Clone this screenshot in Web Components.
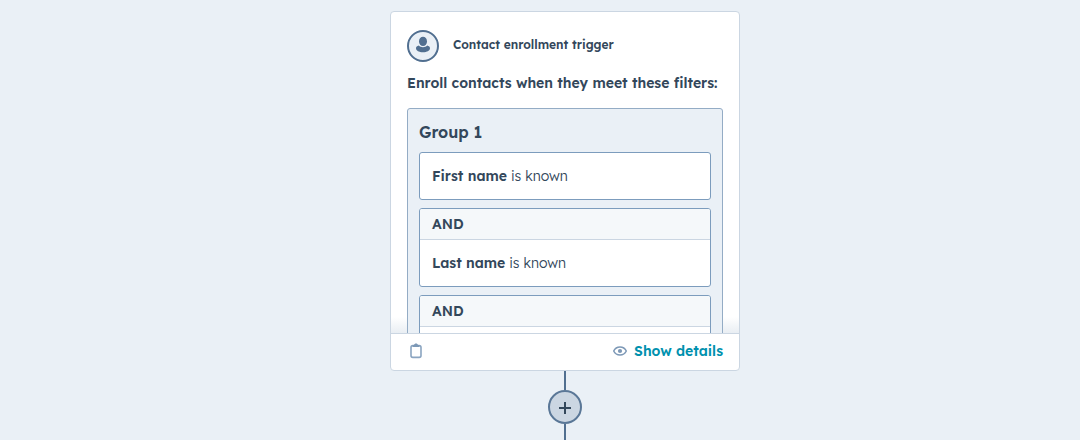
<!DOCTYPE html>
<html lang="en">
<head>
<meta charset="utf-8">
<title>Workflow</title>
<style>
html, body { height: 100%; }
body {
  margin: 0;
  background: #eaf0f6;
  color: #33475b;
  font: 14px/20px "Lexend Deca", Inter, "Open Sans", sans-serif;
}
</style>
</head>
<body>
<workflow-canvas>
  <trigger-card>
    <span slot="title">Contact enrollment trigger</span>
    <span slot="heading">Enroll contacts when they meet these filters:</span>
    <filter-group label="Group 1">
      <filter-rule property="First name" condition="is known"></filter-rule>
      <filter-rule operator="AND" property="Last name" condition="is known"></filter-rule>
      <filter-rule operator="AND"></filter-rule>
    </filter-group>
  </trigger-card>
  <add-step></add-step>
</workflow-canvas>
<script>
const define = (name, html, setup) => customElements.define(name, class extends HTMLElement {
  constructor() {
    super();
    const template = document.createElement('template');
    template.innerHTML = html;
    this.attachShadow({ mode: 'open' }).append(template.content.cloneNode(true));
  }
  connectedCallback() { if (setup) setup(this, this.shadowRoot); }
});

define('workflow-canvas', `
<style>
:host {
  display: flex; flex-direction: column; align-items: center;
  box-sizing: border-box; height: 100vh; overflow: hidden;
  padding: 11px 0 0 50px;
}
</style>
<slot></slot>`);

define('contact-icon', `
<style>
:host { display: block; flex: none; width: 32px; height: 32px; }
svg { display: block; }
</style>
<svg width="32" height="32" viewBox="0 0 32 32" aria-hidden="true">
  <circle cx="16" cy="16" r="15" fill="#eaf0f6" stroke="#516f90" stroke-width="2"/>
  <ellipse cx="16" cy="11.4" rx="4" ry="4.7" fill="#516f90"/>
  <path d="M11.8 15.6C10 16.1 9 17.1 9 18.3C9 20.7 12 22.3 16 22.3S23 20.7 23 18.3C23 17.1 22 16.1 20.2 15.6C19.2 16.6 17.8 17.3 16 17.3S12.8 16.6 11.8 15.6Z" fill="#516f90"/>
</svg>`);

define('trigger-card', `
<style>
:host {
  display: block; box-sizing: border-box; flex: none;
  width: 100%; max-width: 350px;
  background: #fff; border: 1px solid #cbd6e2; border-radius: 4px;
}
.content {
  max-height: 321px; overflow: hidden; box-sizing: border-box;
  padding: 18px 16px 0; border-radius: 3px 3px 0 0;
  background: linear-gradient(to top, #e9eef3, #fff) bottom / 100% 16px no-repeat;
}
header { display: flex; gap: 14px; font-size: 12px; font-weight: 600; }
header div { padding-top: 5px; }
h2 { margin: 11px 0 15px; font-size: 14px; line-height: 20px; font-weight: 600; white-space: nowrap; }
footer {
  display: flex; align-items: center; justify-content: space-between;
  padding: 7px 16px 9px; border-top: 1px solid #cbd6e2;
}
button {
  display: flex; align-items: center; gap: 7px; padding: 0;
  border: 0; background: none; color: #0091ae; cursor: pointer;
  font: inherit; font-weight: 600;
}
svg { display: block; }
</style>
<div class="content">
  <header><contact-icon></contact-icon><div><slot name="title"></slot></div></header>
  <h2><slot name="heading"></slot></h2>
  <slot></slot>
</div>
<footer>
  <button type="button" aria-label="Copy">
    <svg width="18" height="18" viewBox="0 0 18 18" fill="none">
      <rect x="4" y="3.6" width="10" height="11.8" rx="1.8" stroke="#8ba5c1" stroke-width="1.6"/>
      <path d="M5.6 3H7.1C7.2 2 8 1.5 9 1.5S10.8 2 10.9 3H12.4V5H5.6Z" fill="#7c98b6"/>
    </svg>
  </button>
  <button type="button">
    <svg width="14" height="10" viewBox="0 0 14 10" fill="none" aria-hidden="true">
      <path d="M.7 5C2 2.3 4.300 1 7 1S12 2.300 13.3 5C12 7.7 9.7 9 7 9S2 7.7.7 5Z" stroke="#7c98b6" stroke-width="1.5"/>
      <circle cx="7" cy="5" r="2.1" fill="#7c98b6"/>
    </svg>
    Show details
  </button>
</footer>`);

define('filter-group', `
<style>
:host {
  display: block; padding: 11px; background: #eaf0f6;
  border: 1px solid #94acc5; border-radius: 3px;
}
h3 { margin: 0 0 8px; font-size: 16px; line-height: 24px; font-weight: 600; }
.rules { display: flex; flex-direction: column; gap: 8px; }
</style>
<h3></h3>
<div class="rules"><slot></slot></div>`,
(host, root) => { root.querySelector('h3').textContent = host.getAttribute('label'); });

define('filter-rule', `
<style>
:host { display: block; background: #fff; border: 1px solid #7c9cbd; border-radius: 3px; overflow: hidden; }
.operator { padding: 5px 12px; background: #f5f8fa; border-bottom: 1px solid #cbd6e2; font-weight: 600; }
.rule { min-height: 20px; padding: 13px 12px; font-weight: 300; }
b { font-weight: 600; }
[hidden] { display: none; }
</style>
<div class="operator" hidden></div>
<div class="rule"><b></b> <span></span></div>`,
(host, root) => {
  const operator = root.querySelector('.operator');
  operator.textContent = host.getAttribute('operator');
  operator.hidden = !host.hasAttribute('operator');
  root.querySelector('b').textContent = host.getAttribute('property');
  root.querySelector('span').textContent = host.getAttribute('condition');
});

define('add-step', `
<style>
:host { display: flex; flex: 1; flex-direction: column; align-items: center; }
.line { width: 2px; height: 19px; background: #516f90; }
.line.rest { height: auto; flex: 1; }
button {
  display: grid; place-items: center; box-sizing: border-box;
  width: 34px; height: 34px; padding: 0; border: 2px solid #5a7797;
  border-radius: 50%; background: #cbd6e2; cursor: pointer;
}
</style>
<div class="line"></div>
<button type="button" aria-label="Add step">
  <svg width="14" height="14" viewBox="0 0 14 14" aria-hidden="true">
    <path d="M7 2V14M1 8H13" stroke="#33475b" stroke-width="2"/>
  </svg>
</button>
<div class="line rest"></div>`);
</script>
</body>
</html>
